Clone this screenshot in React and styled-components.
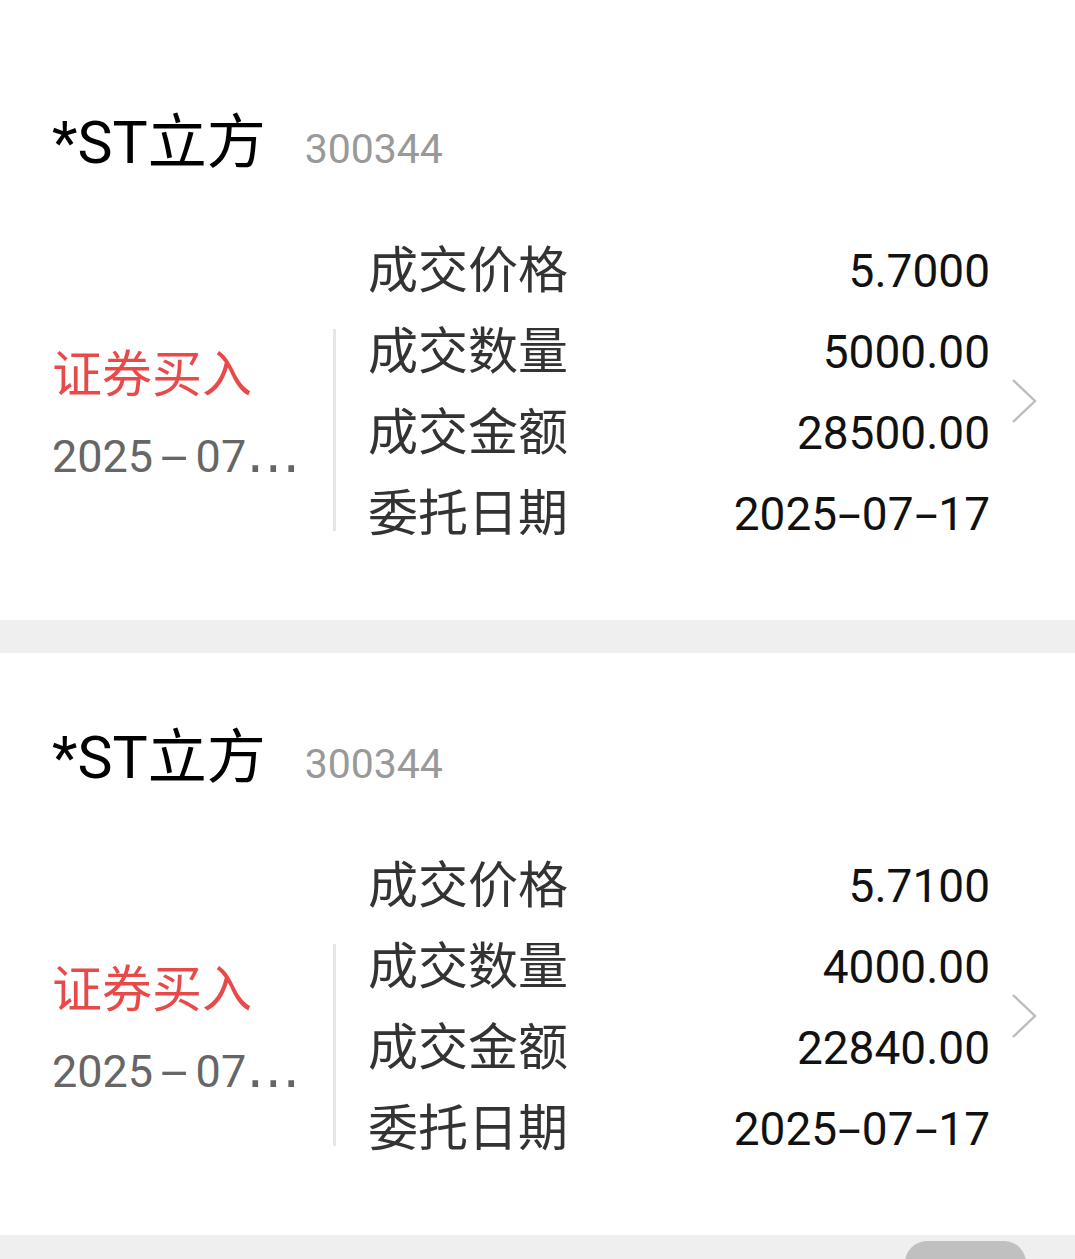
import React from "react";
import styled, { createGlobalStyle } from "styled-components";

const GlobalStyle = createGlobalStyle`
  html, body {
    margin: 0;
    padding: 0;
    background: #efefef;
  }
  body {
    font-family: Roboto, "Noto Sans CJK SC", sans-serif;
    -webkit-font-smoothing: antialiased;
  }
`;

const List = styled.div`
  display: flex;
  flex-direction: column;
  gap: 33px;
  width: 1075px;
`;

const Card = styled.div`
  background: #fff;
  padding: ${(p) => (p.$first ? "38px" : "0")} 38px 66px 52px;
`;

const TitleRow = styled.div`
  display: flex;
  align-items: baseline;
  gap: 39px;
  margin-top: 65px;
  height: 80px;
  line-height: 80px;
`;

const StockName = styled.span`
  font-size: 59px;
  color: #000;
`;

const StockCode = styled.span`
  font-size: 41px;
  color: #999;
`;

const Body = styled.div`
  display: flex;
  align-items: flex-start;
  margin-top: 47px;
`;

const LeftCol = styled.div`
  width: 260px;
  margin-top: 105px;
  display: flex;
  flex-direction: column;
`;

const Direction = styled.div`
  font-size: 50px;
  line-height: 80px;
  color: ${(p) => (p.$sell ? "#2aa15a" : "#e84a4a")};
`;

/* ellipsis drawn in DejaVu for its wide, spread dots */
const DateText = styled.div`
  font-family: "DejaVu Sans", sans-serif;
  font-size: 54px;
  line-height: 78px;
  color: #666;
  white-space: nowrap;
  overflow: hidden;
  text-overflow: ellipsis;
`;

const DateInner = styled.span`
  font-family: Roboto, sans-serif;
  font-size: 45px;
`;

const Divider = styled.div`
  width: 3px;
  height: 202px;
  background: #e6e6e6;
  margin: 99px 32px 0 21px;
`;

const Rows = styled.div`
  flex: 1;
  display: flex;
  flex-direction: column;
`;

const Row = styled.div`
  display: flex;
  justify-content: space-between;
  align-items: center;
  height: 81px;
`;

const Label = styled.span`
  font-size: 50px;
  color: #333;
  margin-bottom: 10px;
`;

const Value = styled.span`
  font-size: 46px;
  color: #111;
`;

const Dash = styled.span`
  display: inline-block;
  margin: 0 ${(p) => p.$gap}px;
  transform: scaleX(${(p) => p.$stretch});
`;

const ChevronBox = styled.div`
  margin: 148px 0 0 21px;
  width: 26px;
  height: 46px;
  display: flex;
`;

const Footer = styled.div`
  display: flex;
  justify-content: flex-end;
  padding: 6px 49px 0 0;
  height: 40px;
  margin-top: -33px;
`;

const Pill = styled.div`
  width: 121px;
  height: 40px;
  background: #c0c0c0;
  border-radius: 22px 22px 0 0;
`;

const withDashes = (s, gap, stretch) =>
  s.split("-").map((part, i) => (
    <React.Fragment key={i}>
      {i > 0 && (
        <Dash $gap={gap} $stretch={stretch}>
          -
        </Dash>
      )}
      {part}
    </React.Fragment>
  ));

const Chevron = () => (
  <ChevronBox>
    <svg width="26" height="46" viewBox="0 0 26 46" fill="none">
      <path d="M2 2 L24 23 L2 44" stroke="#bdbdbd" strokeWidth="2.4" />
    </svg>
  </ChevronBox>
);

const trades = [
  {
    name: "*ST立方",
    code: "300344",
    dir: "证券买入",
    time: "2025-07-17 14:32:05",
    price: "5.7000",
    qty: "5000.00",
    amount: "28500.00",
    date: "2025-07-17",
  },
  {
    name: "*ST立方",
    code: "300344",
    dir: "证券买入",
    time: "2025-07-17 10:15:41",
    price: "5.7100",
    qty: "4000.00",
    amount: "22840.00",
    date: "2025-07-17",
  },
];

const TradeCard = ({ trade, first }) => (
  <Card $first={first}>
    <TitleRow>
      <StockName>{trade.name}</StockName>
      <StockCode>{trade.code}</StockCode>
    </TitleRow>
    <Body>
      <LeftCol>
        <Direction>{trade.dir}</Direction>
        <DateText>
          <DateInner>{withDashes(trade.time, 15, 2.2)}</DateInner>
        </DateText>
      </LeftCol>
      <Divider />
      <Rows>
        <Row>
          <Label>成交价格</Label>
          <Value>{trade.price}</Value>
        </Row>
        <Row>
          <Label>成交数量</Label>
          <Value>{trade.qty}</Value>
        </Row>
        <Row>
          <Label>成交金额</Label>
          <Value>{trade.amount}</Value>
        </Row>
        <Row>
          <Label>委托日期</Label>
          <Value>{withDashes(trade.date, 6, 1.8)}</Value>
        </Row>
      </Rows>
      <Chevron />
    </Body>
  </Card>
);

export default function App() {
  return (
    <>
      <GlobalStyle />
      <List>
        {trades.map((t, i) => (
          <TradeCard key={i} trade={t} first={i === 0} />
        ))}
        <Footer>
          <Pill />
        </Footer>
      </List>
    </>
  );
}
